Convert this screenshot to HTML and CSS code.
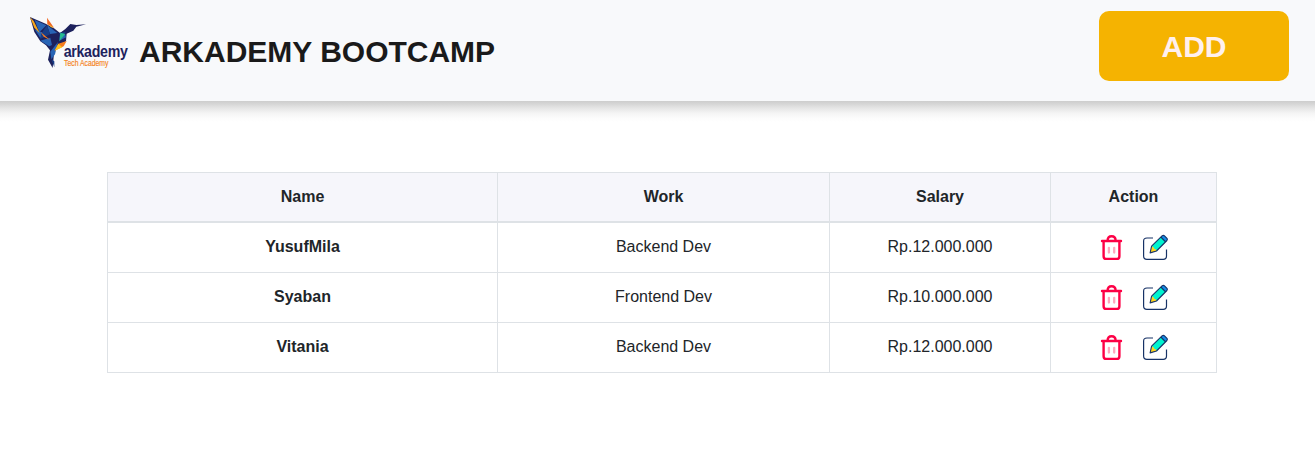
FILE: index.html
```html
<!DOCTYPE html>
<html lang="en">
<head>
<meta charset="utf-8">
<title>Arkademy Bootcamp</title>
<link rel="stylesheet" href="styles.css">
</head>
<body>
<svg class="sprite" aria-hidden="true">
  <symbol id="trash" viewBox="0 0 28 30">
    <path d="M5.600 10v14.200q0 2.700 2.700 2.700h10.400q2.700 0 2.700-2.700V10M4 9h19M9.600 8.500q0-4.300 4-4.300t4 4.300" fill="none" stroke="#fd0045" stroke-width="2.400" stroke-linecap="round"/>
    <path d="M10.900 15.800v4.800M16.200 15.800v4.800" stroke="#ffa8bd" stroke-width="2.300" stroke-linecap="round"/>
  </symbol>
  <symbol id="edit" viewBox="0 0 30 30">
    <path d="M13 6H7Q3.600 6 3.600 9v15q0 3.300 3.300 3.300h16.300q3.300 0 3.300-3.300v-6.500" fill="none" stroke="#173266" stroke-width="1.200"/>
    <path d="M11.600 14.200 21.500 4.400l4.900 4.900-9.900 9.700z" fill="#00f3cf"/>
    <path d="m11.600 14.200-1.500 6.700 6.400-1.900q-.4-2.300-2.300-2.300.1-2-2.600-2.500z" fill="#ffd51d"/>
    <path d="m20.800 5 1.500-1.300q1.200-.8 2.200.1l2.500 2.500q.8 1-.1 2.200L25.700 10z" fill="#168ce8"/>
    <path d="M11.600 14.200 22.300 3.700q1.200-.8 2.200.1l2.500 2.500q.8 1-.1 2.200L16.500 19l-6.400 1.900zM20.800 5l4.900 5" fill="none" stroke="#173266" stroke-width="1.100" stroke-linejoin="round"/>
  </symbol>
</svg>
<header class="header">
  <div class="brand">
    <svg class="logo" viewBox="24 30 306 162" role="img" aria-label="Arkademy Tech Academy">
      <path fill="#1d225d" d="m30 36 47 20 25 14 18 14 16-12 15-15 18 3 29-2-29 7-9 12-20 9-2 23-23 12-13 24-4 44-14-25 6-28-12-15-17-12-18-28z"/>
      <path fill="#2864b5" d="m44 45 35 16-21 21zM44 73l27 11-10 15zM61 107l30-9 5 22-8 4zM81 60l31 24-22 3zM91 140l23-29-9 37-11 15zM117 108l21-11-3-10z"/>
      <path fill="#173e87" d="m63 87 18-26 9 27-29 14zM119 83l19-3-21 28zM94 163l9 6v18z"/>
      <path fill="#f7a81b" d="m30 36 11 12 18 36-16-16z"/>
      <path fill="#ef6823" d="m81 38 21 30-20-10z"/>
      <path fill="#f8b51b" d="m83 57 19 11-9-1z"/>
      <path fill="#f47b20" d="m62 81 28 24-19-10zM115 116l25-8-9 16-27 13z"/>
      <path fill="#ffc31f" d="m115 116 12 11-23 10z"/>
      <path fill="#26bd91" d="m121 83 15 4-18 22z"/>
      <text class="logo-name" transform="translate(131 156) scale(.87 1)">arkademy</text>
      <text class="logo-tagline" transform="translate(132 183) scale(.79 1)">Tech Academy</text>
    </svg>
    <h1 class="title">ARKADEMY BOOTCAMP</h1>
  </div>
  <button class="add" type="button">ADD</button>
</header>
<main class="content">
  <table class="table">
    <colgroup><col class="col-name"><col class="col-work"><col class="col-salary"><col class="col-action"></colgroup>
    <thead><tr><th>Name</th><th>Work</th><th>Salary</th><th>Action</th></tr></thead>
    <tbody>
      <tr><th>YusufMila</th><td>Backend Dev</td><td>Rp.12.000.000</td><td><div class="actions"><svg class="trash"><use href="#trash"/></svg><svg class="edit"><use href="#edit"/></svg></div></td></tr>
      <tr><th>Syaban</th><td>Frontend Dev</td><td>Rp.10.000.000</td><td><div class="actions"><svg class="trash"><use href="#trash"/></svg><svg class="edit"><use href="#edit"/></svg></div></td></tr>
      <tr><th>Vitania</th><td>Backend Dev</td><td>Rp.12.000.000</td><td><div class="actions"><svg class="trash"><use href="#trash"/></svg><svg class="edit"><use href="#edit"/></svg></div></td></tr>
    </tbody>
  </table>
</main>
</body>
</html>
```

FILE: styles.css
```css
* { box-sizing: border-box; }
body {
  margin: 0;
  background: #fff;
  color: #212529;
  font: 16px/24px "Liberation Sans", Arial, sans-serif;
}
.sprite { display: none; }
.header {
  display: flex;
  justify-content: space-between;
  align-items: flex-start;
  height: 101px;
  padding: 11px 26px 0 28px;
  background: #f8f9fb;
}
.brand { display: flex; padding-top: 4px; }
.logo { width: 102px; height: 54px; }
.logo-name { font: bold 49px "Liberation Sans", Arial, sans-serif; letter-spacing: -1px; fill: #1d225d; }
.logo-tagline { font: 26px "Liberation Sans", Arial, sans-serif; fill: #f58220; stroke: #f58220; stroke-width: .5px; }
.title {
  margin: 19px 0 0 9px;
  color: #1a1a1a;
  font-size: 30px;
  line-height: 36px;
  font-weight: bold;
}
.add {
  width: 190px;
  height: 70px;
  padding: 2px 0 0;
  border: 0;
  border-radius: 10px;
  background: #f5b301;
  color: #fff0ee;
  font: bold 30px "Liberation Sans", Arial, sans-serif;
}
.content {
  padding: 71px 98px 0 107px;
  background: linear-gradient(#cdcdcd 0, #d6d6d6 3px, #e5e5e5 7px, #f4f4f4 12px, #fcfcfc 17px, #fff 21px);
}
.table {
  width: 1110px;
  table-layout: fixed;
  border-collapse: collapse;
  text-align: center;
}
.col-name { width: 390px; }
.col-work { width: 332px; }
.col-salary { width: 221px; }
.col-action { width: 166px; }
.table th, .table td {
  height: 50px;
  padding: 0;
  border: 1px solid #dee2e6;
  vertical-align: middle;
}
.table thead th { height: 49px; background: #f6f6fb; border-bottom-width: 2px; }
.table tbody tr:first-child > * { height: 51px; }
.actions { display: flex; height: 30px; padding-left: 47px; gap: 14px; }
.table tbody th, .table tbody td { padding-bottom: 1px; }
.trash { width: 28px; height: 30px; }
.edit { width: 30px; height: 30px; }
```
